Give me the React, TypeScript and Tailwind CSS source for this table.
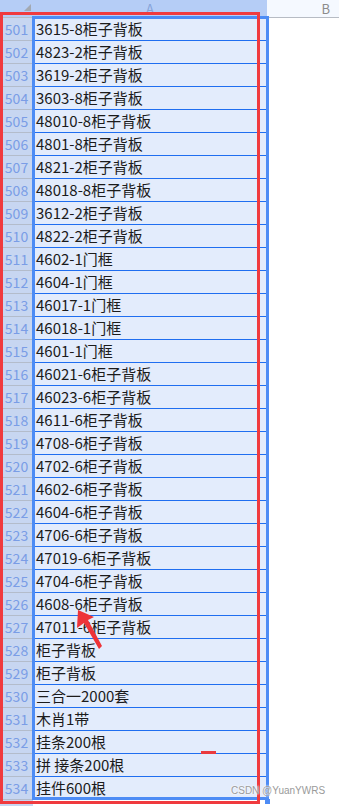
import React from "react";

const rows: [number, string][] = [
  [501, "3615-8柜子背板"],
  [502, "4823-2柜子背板"],
  [503, "3619-2柜子背板"],
  [504, "3603-8柜子背板"],
  [505, "48010-8柜子背板"],
  [506, "4801-8柜子背板"],
  [507, "4821-2柜子背板"],
  [508, "48018-8柜子背板"],
  [509, "3612-2柜子背板"],
  [510, "4822-2柜子背板"],
  [511, "4602-1门框"],
  [512, "4604-1门框"],
  [513, "46017-1门框"],
  [514, "46018-1门框"],
  [515, "4601-1门框"],
  [516, "46021-6柜子背板"],
  [517, "46023-6柜子背板"],
  [518, "4611-6柜子背板"],
  [519, "4708-6柜子背板"],
  [520, "4702-6柜子背板"],
  [521, "4602-6柜子背板"],
  [522, "4604-6柜子背板"],
  [523, "4706-6柜子背板"],
  [524, "47019-6柜子背板"],
  [525, "4704-6柜子背板"],
  [526, "4608-6柜子背板"],
  [527, "47011-6柜子背板"],
  [528, "柜子背板"],
  [529, "柜子背板"],
  [530, "三合一2000套"],
  [531, "木肖1带"],
  [532, "挂条200根"],
  [533, "拼 接条200根"],
  [534, "挂件600根"],
];

const font = { fontFamily: '"Noto Sans CJK SC", "Noto Sans", sans-serif' };

export default function App() {
  return (
    <div className="relative w-[339px] h-[806px] overflow-hidden bg-white" style={font}>
      {/* column header */}
      <div className="flex h-[18px] border-b border-[#b7bcc4]">
        <div className="relative w-[267px] bg-[#b5cdf6] flex">
          <div className="relative w-[33px]">
            <div className="absolute right-[2px] top-[4px] w-0 h-0 border-l-[7px] border-l-transparent border-b-[7px] border-b-[#a3a9b2]" />
          </div>
          <div className="flex-1 flex items-center justify-center text-[13px] leading-none text-[#86a3d9]">A</div>
        </div>
        <div className="flex-1 bg-[#f5f9ff] flex items-center justify-end pr-[9px] text-[13px] leading-none text-[#8c8c8c]">B</div>
      </div>

      {/* rows */}
      {rows.map(([n, t]) => (
        <div key={n} className="flex h-[23px]">
          <div className="w-[33px] shrink-0 bg-[#c7d6f1] border-b border-[#b3bccb] flex items-center justify-center text-[14px] text-[#7a9de6]">
            {n}
          </div>
          <div className="w-[234px] shrink-0 bg-[#e3ecfc] border-b border-[#1f6ef0] flex items-center pl-[3px] text-[15px] text-[#1b1b1b] whitespace-nowrap">
            {t}
          </div>
          <div className="flex-1 bg-white" />
        </div>
      ))}
      <div className="flex h-[23px]">
        <div className="w-[33px] shrink-0 bg-[#c7d6f1]" />
        <div className="flex-1 bg-white" />
      </div>

      {/* selection border */}
      <div className="absolute left-[32px] top-[16px] w-[237px] h-[784px] border-[3px] border-[#4d8cf5]" />
      <div className="absolute left-[265px] top-[799px] w-[5px] h-[5px] bg-[#4d8cf5]" />

      {/* red annotation box */}
      <div className="absolute left-0 top-[12px] w-[260px] h-[792px] border-[3px] border-[#f03a3e]" />

      {/* small red dash */}
      <div className="absolute left-[201px] top-[751px] w-[15px] h-[3px] bg-[#ea3a3e]" />

      {/* red arrow */}
      <svg className="absolute left-0 top-0" width="339" height="806" viewBox="0 0 339 806">
        <polygon points="78,610 94,617 88,620 102,646 99,649 84,623 77,628" fill="#ee3338" />
      </svg>

      {/* watermark */}
      <div
        className="absolute left-[231px] top-[785px] text-[10px] leading-[12px] text-[#9a9a9a] whitespace-nowrap"
        style={{ fontFamily: '"Liberation Sans", Arial, sans-serif', textShadow: "0 0 2px #fff, 0 0 2px #fff" }}
      >
        CSDN @YuanYWRS
      </div>
    </div>
  );
}
